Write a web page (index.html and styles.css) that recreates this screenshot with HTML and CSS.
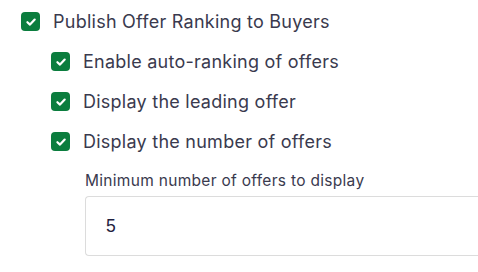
FILE: index.html
```html
<!DOCTYPE html>
<html>
<head>
<meta charset="utf-8">
<link rel="stylesheet" href="styles.css">
</head>
<body>
<div class="settings">
  <label class="check">
    <span class="box"><svg viewBox="0 0 12 12" width="12" height="12"><path d="M2.4 6.2 L5 8.6 L9.7 3.6" fill="none" stroke="#fff" stroke-width="2.2" stroke-linecap="round" stroke-linejoin="round"/></svg></span>
    <span class="text">Publish Offer Ranking to Buyers</span>
  </label>
  <div class="children">
    <label class="check">
      <span class="box"><svg viewBox="0 0 12 12" width="12" height="12"><path d="M2.4 6.2 L5 8.6 L9.7 3.6" fill="none" stroke="#fff" stroke-width="2.2" stroke-linecap="round" stroke-linejoin="round"/></svg></span>
      <span class="text">Enable auto-ranking of offers</span>
    </label>
    <label class="check">
      <span class="box"><svg viewBox="0 0 12 12" width="12" height="12"><path d="M2.4 6.2 L5 8.6 L9.7 3.6" fill="none" stroke="#fff" stroke-width="2.2" stroke-linecap="round" stroke-linejoin="round"/></svg></span>
      <span class="text">Display the leading offer</span>
    </label>
    <label class="check">
      <span class="box"><svg viewBox="0 0 12 12" width="12" height="12"><path d="M2.4 6.2 L5 8.6 L9.7 3.6" fill="none" stroke="#fff" stroke-width="2.2" stroke-linecap="round" stroke-linejoin="round"/></svg></span>
      <span class="text">Display the number of offers</span>
    </label>
    <div class="field">
      <div class="field-label">Minimum number of offers to display</div>
      <div class="input">5</div>
    </div>
  </div>
</div>
</body>
</html>
```
FILE: styles.css
```css
html, body {
  margin: 0;
  padding: 0;
  background: #fff;
  overflow: hidden;
}
.settings {
  padding: 12px 0 0 21px;
  font-family: Inter, "Noto Sans", sans-serif;
  color: #3a3a4e;
}
.check {
  display: flex;
  align-items: center;
  height: 19px;
  margin-bottom: 21px;
}
.box {
  width: 19px;
  height: 19px;
  border-radius: 4px;
  background: #0b7d3e;
  display: flex;
  align-items: center;
  justify-content: center;
  flex: none;
}
.text {
  margin-left: 13px;
  font-size: 18px;
  letter-spacing: 0.25px;
  line-height: 19px;
}
.children {
  padding-left: 30px;
}
.field {
  margin-top: 13px;
  padding-left: 34px;
}
.field-label {
  font-size: 15.5px;
  letter-spacing: 0.3px;
  line-height: 18px;
  color: #3a3a4e;
}
.input {
  margin-top: 6px;
  height: 58px;
  border: 1px solid #dcdcdc;
  border-right: none;
  border-radius: 4px 0 0 4px;
  display: flex;
  align-items: center;
  padding-left: 20px;
  font-family: "Liberation Sans", Arial, sans-serif;
  font-size: 17.5px;
  color: #1f2140;
}
```
